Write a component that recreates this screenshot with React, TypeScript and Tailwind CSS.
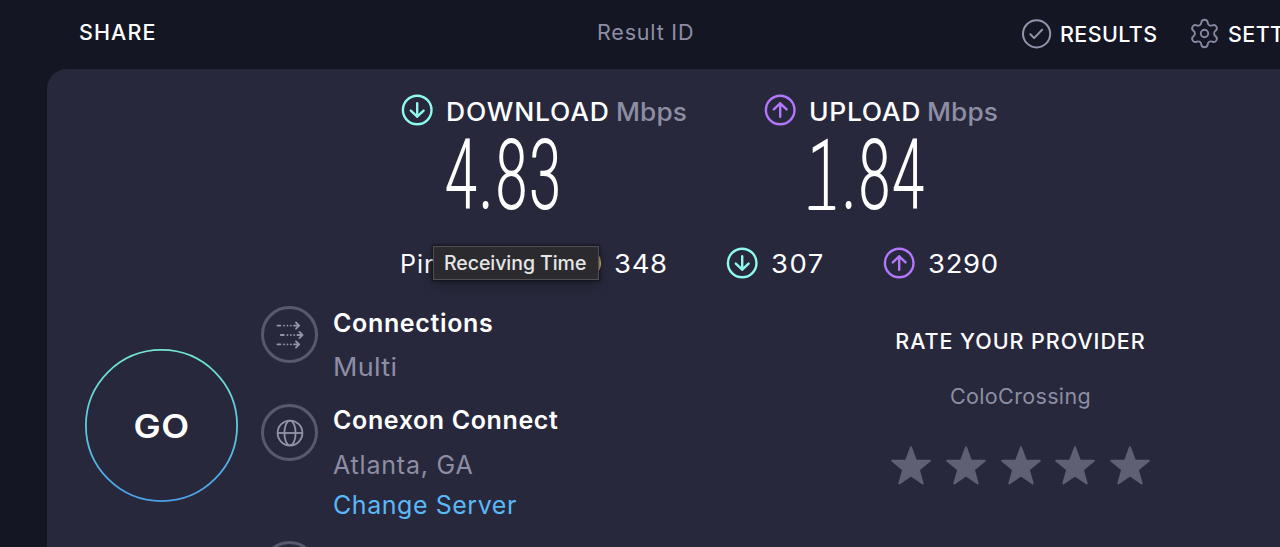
interface ArrowCircleProps {
  direction: "up" | "down";
}

const ArrowCircle = ({ direction }: ArrowCircleProps) => (
  <svg
    viewBox="0 0 32 32"
    fill="none"
    strokeWidth="2.4"
    strokeLinecap="round"
    strokeLinejoin="round"
    className={direction === "down" ? "size-8 shrink-0 stroke-[#8ff9ef]" : "size-8 shrink-0 stroke-[#b377fb]"}
  >
    <circle cx="16.2" cy="16" r="14.3" />
    <path d={direction === "down" ? "M16.2 9.3v13.4M9.8 16.6l6.4 6.1 6.4-6.1" : "M16.2 22.7V9.3M9.8 15.4l6.4-6.1 6.4 6.1"} />
  </svg>
);

const CheckIcon = () => (
  <svg viewBox="0 0 30 30" fill="none" strokeLinecap="round" strokeLinejoin="round" className="size-[30px] shrink-0 stroke-[#9294ab]">
    <circle cx="14.6" cy="14.8" r="13.6" strokeWidth="2" />
    <path d="M8.4 15.3l3.7 3.8 8-8.3" strokeWidth="2" />
  </svg>
);

const GearIcon = () => (
  <svg viewBox="0 0 24 24" fill="none" strokeWidth="1.35" strokeLinejoin="round" className="size-[33px] shrink-0 stroke-[#8789a0]">
    <path d="M9.671 4.136a2.34 2.34 0 0 1 4.659 0 2.34 2.34 0 0 0 3.319 1.915 2.34 2.34 0 0 1 2.33 4.033 2.34 2.34 0 0 0 0 3.831 2.34 2.34 0 0 1-2.33 4.033 2.34 2.34 0 0 0-3.319 1.915 2.34 2.34 0 0 1-4.659 0 2.34 2.34 0 0 0-3.32-1.915 2.34 2.34 0 0 1-2.33-4.033 2.34 2.34 0 0 0 0-3.831A2.34 2.34 0 0 1 6.35 6.051a2.34 2.34 0 0 0 3.319-1.915z" />
    <circle cx="12" cy="12" r="2.7" />
  </svg>
);

const ConnectionsIcon = () => (
  <svg viewBox="0 0 28 28" fill="none" strokeWidth="1.8" strokeLinecap="round" strokeLinejoin="round" className="h-7 w-7 stroke-[#9193a8]">
    <path d="M1.4 4.6h3M8 4.6h.1M11.4 4.6h.1M14.8 4.6h.1M18 4.6h5.2M20 1.5l3.2 3.1L20 7.7" />
    <path d="M4.8 14h3M11.4 14h.1M14.8 14h.1M18.2 14h.1M21.4 14h5.2M23.4 10.9l3.2 3.1-3.2 3.1" />
    <path d="M1.4 23.4h3M8 23.4h.1M11.4 23.4h.1M14.8 23.4h.1M18 23.4h5.2M20 20.3l3.2 3.1-3.2 3.1" />
  </svg>
);

const GlobeIcon = () => (
  <svg viewBox="0 0 28 28" fill="none" strokeWidth="1.8" className="h-7 w-7 stroke-[#9193a8]">
    <circle cx="14" cy="14" r="12.4" />
    <ellipse cx="14" cy="14" rx="5.6" ry="12.4" />
    <path d="M1.6 14h24.8" />
  </svg>
);

const Star = () => (
  <svg viewBox="0 0 40 39" strokeWidth="2" strokeLinejoin="round" className="h-[39px] w-10 fill-[#5f6074] stroke-[#5f6074]">
    <path d="M20 1.4l4.9 13.1 13.9.3-11 8.8 3.9 13.9L20 29.4 8.3 37.5l3.9-13.9-11-8.8 13.9-.3z" />
  </svg>
);

const IconRing = ({ children }: { children?: React.ReactNode }) => (
  <div className="flex size-[57px] shrink-0 items-center justify-center rounded-full border-3 border-[#59596d]">
    {children}
  </div>
);

const Header = () => (
  <header className="flex h-[69px] w-[1400px] items-start pl-[79px] text-[21.5px] leading-[26px] font-medium">
    <a href="#share" className="mt-[19px] w-[518px] tracking-[1.1px]">SHARE</a>
    <span className="mt-[19px] w-[425px] font-normal tracking-[0.8px] text-[#8d8ea5]">Result ID</span>
    <a href="#results" className="mt-[19px] flex w-[166px] items-center gap-[8px]">
      <CheckIcon />
      <span className="tracking-[0.4px]">RESULTS</span>
    </a>
    <a href="#settings" className="mt-[17px] flex items-center gap-[7px]">
      <GearIcon />
      <span className="mt-px tracking-[0.4px]">SETTINGS</span>
    </a>
  </header>
);

const Speeds = () => (
  <div>
    <div className="flex h-8 items-center pl-[354px] text-[25px] leading-7">
      <ArrowCircle direction="down" />
      <span className="mt-1 ml-[13px] w-[170px] origin-left scale-x-106 font-medium tracking-[0.75px]">DOWNLOAD</span>
      <span className="mt-1 w-[148px] origin-left scale-x-105 font-medium tracking-[0.1px] text-[#8d8ea5]">Mbps</span>
      <ArrowCircle direction="up" />
      <span className="mt-1 ml-[13px] w-[118px] origin-left scale-x-106 font-medium tracking-[0.6px]">UPLOAD</span>
      <span className="mt-1 origin-left scale-x-105 font-medium tracking-[0.1px] text-[#8d8ea5]">Mbps</span>
    </div>
    <div className="flex h-[98px] items-center pt-[2px] pl-[397px] font-[Roboto,sans-serif] text-[98px] leading-[98px] font-light [font-stretch:75%]">
      <span className="w-[363px] origin-left scale-x-[0.71]">4.83</span>
      <span className="origin-left scale-x-[0.71]">
        <span className="relative after:absolute after:bottom-[23px] after:left-[2px] after:h-[4px] after:w-[38px] after:rounded-full after:bg-white">1</span>
        .84
      </span>
    </div>
  </div>
);

const Latency = () => (
  <div className="mt-[23px] flex h-8 items-center pl-[353px] text-[25px] leading-7">
    <div className="relative mt-px w-[169px]">
      <span className="tracking-[1px]">Ping</span>
      <div className="absolute top-[-4px] left-[33px] z-10 flex h-[34px] w-[166px] items-center border border-[#505055] bg-[#2b2b2f] pl-[10px] text-[19.5px] font-medium tracking-[-0.05px] whitespace-nowrap text-[#e6e6e8] shadow-[0_0_2px_1px_rgba(0,0,0,0.5),0_4px_12px_rgba(0,0,0,0.3)]">
        Receiving Time
      </div>
    </div>
    <div className="size-8 rounded-full border-[2.3px] border-[#efe07c]" />
    <span className="mt-px ml-[13px] w-[112px] origin-left scale-x-110 tracking-[0.6px]">348</span>
    <ArrowCircle direction="down" />
    <span className="mt-px ml-[13px] w-[112px] origin-left scale-x-110 tracking-[1.3px]">307</span>
    <ArrowCircle direction="up" />
    <span className="mt-px ml-[13px] origin-left scale-x-110 tracking-[0.6px]">3290</span>
  </div>
);

const GoButton = () => (
  <button className="relative mt-[70px] ml-[38px] flex size-[153px] shrink-0 items-center justify-center">
    <svg viewBox="0 0 153 153" fill="none" className="absolute inset-0">
      <defs>
        <linearGradient id="goRing" x1="0" y1="0" x2="0" y2="1">
          <stop offset="0" stopColor="#72e6cf" />
          <stop offset="0.5" stopColor="#60c5e0" />
          <stop offset="1" stopColor="#4c9fe6" />
        </linearGradient>
      </defs>
      <circle cx="76.5" cy="76.5" r="75.6" stroke="url(#goRing)" strokeWidth="1.8" />
    </svg>
    <span className="mt-[3px] scale-x-110 text-[33px] font-semibold tracking-[0.5px]">GO</span>
  </button>
);

const Details = () => (
  <div className="mt-[27px] ml-[23px] w-[630px] text-[25px] leading-[34px]">
    <div className="flex h-[98px] gap-[15px]">
      <IconRing><ConnectionsIcon /></IconRing>
      <div>
        <div className="font-semibold tracking-[0.65px]">Connections</div>
        <div className="mt-[10px] origin-left scale-x-108 tracking-[0.3px] text-[#8d8ea5]">Multi</div>
      </div>
    </div>
    <div className="flex h-[137px] gap-[15px]">
      <IconRing><GlobeIcon /></IconRing>
      <div>
        <div className="-mt-px font-semibold tracking-[0.62px]">Conexon Connect</div>
        <div className="mt-[11px] tracking-[0.8px] text-[#8d8ea5]">Atlanta, GA</div>
        <a href="#servers" className="mt-[6px] block tracking-[0.55px] text-[#5ab8f8]">Change Server</a>
      </div>
    </div>
    <div className="flex gap-[15px]">
      <IconRing />
      <div className="font-semibold tracking-[0.2px]">ColoCrossing</div>
    </div>
  </div>
);

const Rating = () => (
  <div className="mt-[50px] flex w-[259px] shrink-0 flex-col items-center text-[21.5px] leading-6 whitespace-nowrap">
    <div className="font-medium tracking-[0.95px]">RATE YOUR PROVIDER</div>
    <div className="mt-[31px] tracking-[0.35px] text-[#8d8ea5]">ColoCrossing</div>
    <div className="mt-[38px] flex w-full justify-between">
      {[1, 2, 3, 4, 5].map((n) => (
        <Star key={n} />
      ))}
    </div>
  </div>
);

export default function App() {
  return (
    <div className="h-[547px] w-full overflow-hidden bg-[#141624] font-[Inter,sans-serif] text-white">
      <Header />
      <main className="ml-[47px] h-[478px] overflow-hidden rounded-tl-[20px] bg-[#27283b] pt-[25px]">
        <Speeds />
        <Latency />
        <div className="flex items-start">
          <GoButton />
          <Details />
          <Rating />
        </div>
      </main>
    </div>
  );
}
